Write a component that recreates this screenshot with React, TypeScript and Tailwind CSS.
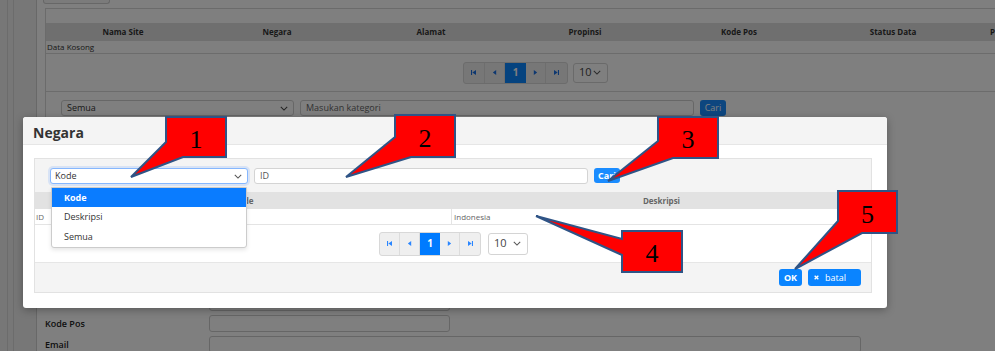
import React from 'react';

const Chevron = ({ className = '' }: { className?: string }) => (
  <svg viewBox="0 0 10 6" className={className} fill="none" stroke="currentColor" strokeWidth="1.3">
    <path d="M1 1l4 4 4-4" />
  </svg>
);

const PageIcon = ({ kind }: { kind: 'first' | 'prev' | 'next' | 'last' }) => (
  <svg viewBox="0 0 6 6" className="w-[5px] h-[5px]" fill="currentColor">
    {kind === 'first' && (
      <>
        <rect x="0" y="0" width="1.3" height="6" />
        <path d="M6 0v6L1.6 3z" />
      </>
    )}
    {kind === 'prev' && <path d="M5 0v6L1 3z" />}
    {kind === 'next' && <path d="M1 0v6l4-3z" />}
    {kind === 'last' && (
      <>
        <path d="M0 0v6l4.4-3z" />
        <rect x="4.7" y="0" width="1.3" height="6" />
      </>
    )}
  </svg>
);

type PagerProps = { cell: string; height: string; active: string; icon: string };

const Pager = ({ cell, height, active, icon }: PagerProps) => (
  <div className={`flex ${height} border border-[#d8d8d8] rounded-[3px] bg-[#efefef] overflow-hidden`}>
    <div className={`${cell} flex items-center justify-center border-r border-[#dcdcdc] ${icon}`}>
      <PageIcon kind="first" />
    </div>
    <div className={`${cell} flex items-center justify-center border-r border-[#dcdcdc] ${icon}`}>
      <PageIcon kind="prev" />
    </div>
    <div className={`${cell} flex items-center justify-center ${active} text-white text-[10px] font-bold`}>1</div>
    <div className={`${cell} flex items-center justify-center border-r border-[#dcdcdc] ${icon}`}>
      <PageIcon kind="next" />
    </div>
    <div className={`${cell} flex items-center justify-center ${icon}`}>
      <PageIcon kind="last" />
    </div>
  </div>
);

const SizeSelect = ({ w, h }: { w: string; h: string }) => (
  <div className={`${w} ${h} border border-[#d4d4d4] rounded-[3px] bg-white flex items-center justify-between pl-[5px] pr-[6px] text-[11px] text-[#444]`}>
    <span>10</span>
    <Chevron className="w-[8px] h-[5px] text-[#555]" />
  </div>
);

const bgColumns = ['Nama Site', 'Negara', 'Alamat', 'Propinsi', 'Kode Pos', 'Status Data'];

const formRows = ['Nama Site', 'Negara', 'Alamat', 'Propinsi', 'Kota', 'Telepon', 'Fax', 'Kode Pos Lama', 'Kode Pos', 'Email'];

type Callout = { n: string; path: string; box: { l: number; t: number; w: number; h: number } };

const callouts: Callout[] = [
  { n: '1', path: 'M166 117H226V157H183L131 177L166 142Z', box: { l: 166, t: 117, w: 60, h: 40 } },
  { n: '2', path: 'M395 115H455V157H411L346 177L395 137Z', box: { l: 395, t: 115, w: 60, h: 42 } },
  { n: '3', path: 'M658 117H718V158H673L608 181L658 141Z', box: { l: 658, t: 117, w: 60, h: 41 } },
  { n: '4', path: 'M622 231H682V272H622V255L536 216L622 239Z', box: { l: 622, t: 231, w: 60, h: 41 } },
  { n: '5', path: 'M838 191H897V233H862L795 269L838 221Z', box: { l: 838, t: 191, w: 59, h: 42 } },
];

const App: React.FC = () => {
  return (
    <div className="relative w-[995px] h-[351px] overflow-hidden bg-white font-['Open_Sans',sans-serif]">
      {/* page behind the dialog */}
      <div className="flex h-full">
        <div className="w-[37px] shrink-0 bg-[#eeeeee] border-r border-[#d0d0d0] flex">
          <div className="w-[8px] border-r border-[#d8d8d8]" />
          <div className="w-[6px] border-r border-[#d8d8d8]" />
        </div>
        <div className="flex-1 min-w-0 pl-[8px] overflow-hidden">
          <div className="-ml-[2px] w-[67px] h-[4px] rounded-b-[3px] border border-t-0 border-[#cfcfcf] bg-[#f7f7f7]" />
          <div className="mt-[4px] w-[990px] border-l border-t border-[#d6d6d6]">
            <div className="h-[14px]" />
            <div className="h-[18px] bg-[#dedede] grid grid-cols-[154px_154px_154px_154px_154px_154px_1fr] items-center text-[8px] font-bold text-[#333] whitespace-nowrap">
              {bgColumns.map((c) => (
                <div key={c} className="text-center">{c}</div>
              ))}
              <div className="pl-[20px]">P</div>
            </div>
            <div className="h-[13px] border-b border-[#d8d8d8] pl-[1px] text-[8px] text-[#333] leading-[12px]">Data Kosong</div>
            <div className="h-[38px] border-b border-[#d8d8d8] flex items-center pl-[417px] gap-[5px]">
              <Pager cell="w-[20.6px]" height="h-[22px]" active="bg-[#0a86ff]" icon="text-[#1b6fe0]" />
              <SizeSelect w="w-[35px]" h="h-[20px]" />
            </div>
            <div className="h-[34px] pl-[15px] pt-[8px] flex gap-[6px]">
              <div className="w-[233px] h-[16px] border border-[#cfcfcf] rounded-[3px] bg-white flex items-center justify-between pl-[5px] pr-[5px] text-[9px] text-[#333]">
                <span>Semua</span>
                <Chevron className="w-[8px] h-[5px] text-[#444]" />
              </div>
              <div className="w-[394px] h-[16px] border border-[#cfcfcf] rounded-[3px] bg-white flex items-center pl-[5px] text-[9px] text-[#666]">
                Masukan kategori
              </div>
              <div className="w-[26px] h-[16px] rounded-[3px] bg-[#1a8cff] text-white text-[9px] flex items-center justify-center">Cari</div>
            </div>
          </div>
          <div className="mt-[21px] flex flex-col gap-[4px]">
            {formRows.map((r, i) => (
              <div key={r} className="flex items-center h-[17px]">
                <div className="w-[164px] text-[9px] font-semibold text-[#222]">{r}</div>
                <div className={`${i === 9 ? 'w-[652px]' : 'w-[241px]'} h-[17px] border border-[#cdcdcd] rounded-[3px] bg-white`} />
              </div>
            ))}
          </div>
        </div>
      </div>

      {/* backdrop */}
      <div className="absolute inset-0 bg-black/50" />

      {/* dialog */}
      <div className="absolute left-[23px] top-[117px] w-[864px] h-[191px] bg-white rounded-[3px] shadow-[0_2px_8px_rgba(0,0,0,0.3)]">
        <div className="h-[28px] bg-[#f4f4f4] border-b border-[#e6e6e6] rounded-t-[3px] flex items-center pl-[10px] pt-[3px] text-[14px] font-bold text-[#333]">
          Negara
        </div>
        <div className="pt-[13px] pl-[11px] pr-[15px]">
          <div className="w-[838px] h-[135px] border border-[#e2e2e2] flex flex-col">
            <div className="h-[33px] bg-[#f4f4f4] pl-[15px] pt-[9px] flex gap-[6px]">
              <div className="relative">
                <div className="w-[198px] h-[16px] border border-[#86b7fe] rounded-[3px] bg-white shadow-[0_0_0_2px_rgba(13,110,253,0.12)] flex items-center justify-between pl-[4px] pr-[5px] text-[9px] text-[#333]">
                  <span>Kode</span>
                  <Chevron className="w-[8px] h-[5px] text-[#555]" />
                </div>
                <div className="absolute left-[1px] top-[19px] w-[196px] bg-white border border-[#cccccc] rounded-b-[3px] shadow-[0_2px_4px_rgba(0,0,0,0.1)] z-10 text-[9px]">
                  <div className="h-[19px] bg-[#0a7cff] text-white font-bold flex items-center pl-[12px]">Kode</div>
                  <div className="h-[20px] text-[#333] flex items-center pl-[12px]">Deskripsi</div>
                  <div className="h-[20px] text-[#333] flex items-center pl-[12px]">Semua</div>
                </div>
              </div>
              <div className="w-[334px] h-[16px] border border-[#d4d4d4] rounded-[3px] bg-white flex items-center pl-[5px] text-[9px] text-[#555]">
                ID
              </div>
              <div className="w-[26px] h-[15px] rounded-[3px] bg-[#1a8cff] text-white text-[9px] font-bold flex items-center justify-center">Cari</div>
            </div>
            <div className="h-[17px] bg-[#e2e2e2] grid grid-cols-[417px_1fr] items-center text-[8px] font-bold text-[#666]">
              <div className="text-center">Kode</div>
              <div className="text-center">Deskripsi</div>
            </div>
            <div className="h-[16px] border-b border-[#e4e4e4] grid grid-cols-[417px_1fr] text-[8px] text-[#666]">
              <div className="pl-[1px] flex items-center border-r border-[#e4e4e4]">ID</div>
              <div className="pl-[2px] flex items-center">Indonesia</div>
            </div>
            <div className="h-[37px] flex items-center justify-center gap-[7px] pl-[1px]">
              <Pager cell="w-[20px]" height="h-[24px]" active="bg-[#007bff]" icon="text-[#2a86ff]" />
              <SizeSelect w="w-[40px]" h="h-[22px]" />
            </div>
            <div className="flex-1 bg-[#f4f4f4] border-t border-[#e6e6e6] flex items-center justify-end gap-[6px] pr-[10px]">
              <div className="w-[23px] h-[17px] rounded-[3px] bg-[#0a84ff] text-white text-[9px] font-bold flex items-center justify-center">OK</div>
              <div className="w-[53px] h-[17px] rounded-[3px] bg-[#0a84ff] text-white text-[9px] flex items-center pl-[6px] gap-[6px]">
                <svg viewBox="0 0 6 6" className="w-[5px] h-[5px]" stroke="currentColor" strokeWidth="1.6">
                  <path d="M0.8 0.8l4.4 4.4M5.2 0.8l-4.4 4.4" />
                </svg>
                <span>batal</span>
              </div>
            </div>
          </div>
        </div>
      </div>

      {/* numbered callouts */}
      <svg className="absolute inset-0 pointer-events-none" width="995" height="351" viewBox="0 0 995 351">
        {callouts.map((c) => (
          <path key={c.n} d={c.path} fill="#ff0000" stroke="#2f5486" strokeWidth="2" strokeLinejoin="miter" />
        ))}
      </svg>
      {callouts.map((c) => (
        <div
          key={c.n}
          className="absolute flex items-center justify-center pt-[5px] font-['Liberation_Serif',serif] text-[26px] leading-none text-black"
          style={{ left: c.box.l, top: c.box.t, width: c.box.w, height: c.box.h }}
        >
          {c.n}
        </div>
      ))}
    </div>
  );
};

export default App;
